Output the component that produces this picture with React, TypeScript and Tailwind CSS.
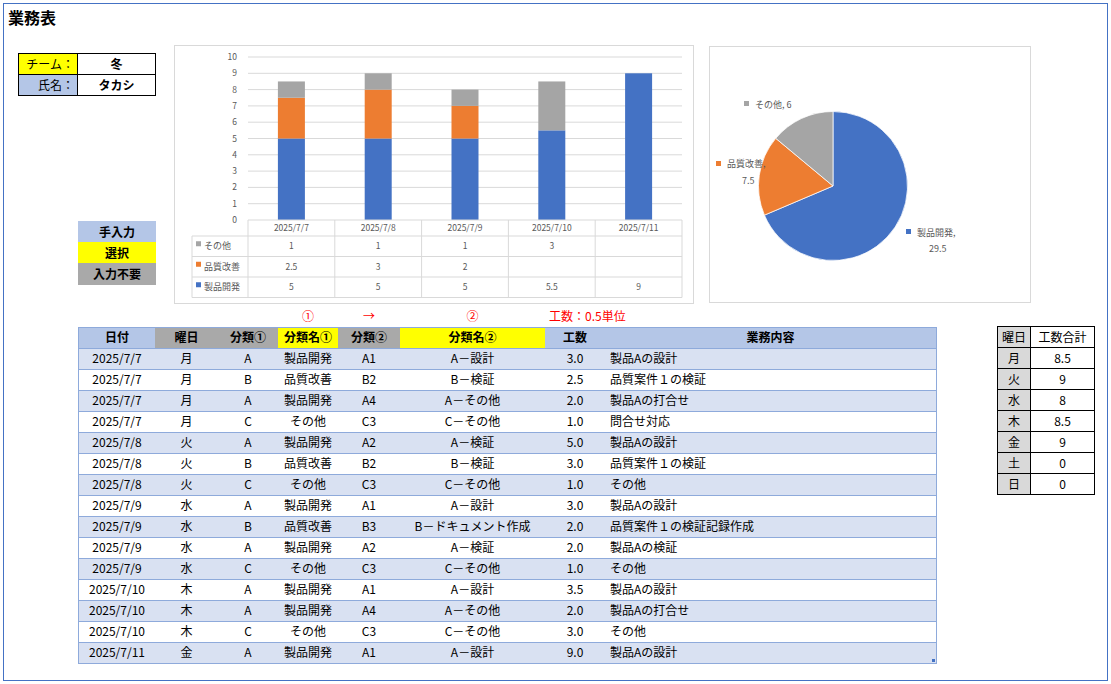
import React from 'react';

type Row = [string, string, string, string, string, string, string, string];

const rows: Row[] = [
  ['2025/7/7', '月', 'A', '製品開発', 'A1', 'A－設計', '3.0', '製品Aの設計'],
  ['2025/7/7', '月', 'B', '品質改善', 'B2', 'B－検証', '2.5', '品質案件１の検証'],
  ['2025/7/7', '月', 'A', '製品開発', 'A4', 'A－その他', '2.0', '製品Aの打合せ'],
  ['2025/7/7', '月', 'C', 'その他', 'C3', 'C－その他', '1.0', '問合せ対応'],
  ['2025/7/8', '火', 'A', '製品開発', 'A2', 'A－検証', '5.0', '製品Aの設計'],
  ['2025/7/8', '火', 'B', '品質改善', 'B2', 'B－検証', '3.0', '品質案件１の検証'],
  ['2025/7/8', '火', 'C', 'その他', 'C3', 'C－その他', '1.0', 'その他'],
  ['2025/7/9', '水', 'A', '製品開発', 'A1', 'A－設計', '3.0', '製品Aの設計'],
  ['2025/7/9', '水', 'B', '品質改善', 'B3', 'B－ドキュメント作成', '2.0', '品質案件１の検証記録作成'],
  ['2025/7/9', '水', 'A', '製品開発', 'A2', 'A－検証', '2.0', '製品Aの検証'],
  ['2025/7/9', '水', 'C', 'その他', 'C3', 'C－その他', '1.0', 'その他'],
  ['2025/7/10', '木', 'A', '製品開発', 'A1', 'A－設計', '3.5', '製品Aの設計'],
  ['2025/7/10', '木', 'A', '製品開発', 'A4', 'A－その他', '2.0', '製品Aの打合せ'],
  ['2025/7/10', '木', 'C', 'その他', 'C3', 'C－その他', '3.0', 'その他'],
  ['2025/7/11', '金', 'A', '製品開発', 'A1', 'A－設計', '9.0', '製品Aの設計'],
];

const cols = [
  { w: 'w-[76px]', head: '日付', bg: 'bg-[#b4c6e7]', align: 'justify-center' },
  { w: 'w-[63px]', head: '曜日', bg: 'bg-[#a9a9a9]', align: 'justify-center' },
  { w: 'w-[60px]', head: '分類①', bg: 'bg-[#a9a9a9]', align: 'justify-center' },
  { w: 'w-[60px]', head: '分類名①', bg: 'bg-[#ffff00]', align: 'justify-center' },
  { w: 'w-[62px]', head: '分類②', bg: 'bg-[#a9a9a9]', align: 'justify-center' },
  { w: 'w-[145px]', head: '分類名②', bg: 'bg-[#ffff00]', align: 'justify-center' },
  { w: 'w-[60px]', head: '工数', bg: 'bg-[#b4c6e7]', align: 'justify-center' },
  { w: 'flex-1', head: '業務内容', bg: 'bg-[#b4c6e7]', align: 'justify-start pl-[5px]' },
];

const totals = [
  ['月', '8.5'],
  ['火', '9'],
  ['水', '8'],
  ['木', '8.5'],
  ['金', '9'],
  ['土', '0'],
  ['日', '0'],
];

// chart data: b = 製品開発, o = 品質改善, g = その他
const chartData = [
  { date: '2025/7/7', b: 5, o: 2.5, g: 1 },
  { date: '2025/7/8', b: 5, o: 3, g: 1 },
  { date: '2025/7/9', b: 5, o: 2, g: 1 },
  { date: '2025/7/10', b: 5.5, o: 0, g: 3 },
  { date: '2025/7/11', b: 9, o: 0, g: 0 },
];

const BLUE = '#4472c4';
const ORANGE = '#ed7d31';
const GRAY = '#a5a5a5';
const LABEL = '#595959';
const LINE = '#d9d9d9';
const FONT = "'Noto Sans CJK JP', 'Noto Sans', sans-serif";

const BarChart = () => {
  const y = (v: number) => 175 - v * 16.3;
  const colW = 86.8;
  const x0 = 74;
  const x1 = x0 + colW * 5;
  const rowLines = [191, 211.5, 232, 252.5];
  const series = [
    { name: 'その他', color: GRAY, key: 'g' as const },
    { name: '品質改善', color: ORANGE, key: 'o' as const },
    { name: '製品開発', color: BLUE, key: 'b' as const },
  ];

  return (
    <svg width={518} height={257} viewBox="1 1 518 257" fontFamily={FONT}>
      {Array.from({ length: 11 }, (_, v) => (
        <g key={v}>
          {v > 0 && <line x1={x0} x2={x1} y1={y(v)} y2={y(v)} stroke={LINE} strokeWidth={1} />}
          <text x={63} y={y(v) + 3} fontSize={8.5} fill={LABEL} textAnchor="end">
            {v}
          </text>
        </g>
      ))}
      {chartData.map((d, i) => {
        const cx = x0 + colW * (i + 0.5);
        const bx = cx - 13.5;
        return (
          <g key={d.date}>
            <rect x={bx} y={y(d.b)} width={27} height={d.b * 16.3} fill={BLUE} />
            {d.o > 0 && <rect x={bx} y={y(d.b + d.o)} width={27} height={d.o * 16.3} fill={ORANGE} />}
            {d.g > 0 && (
              <rect x={bx} y={y(d.b + d.o + d.g)} width={27} height={d.g * 16.3} fill={GRAY} />
            )}
            <text x={cx} y={186} fontSize={8.5} fill={LABEL} textAnchor="middle">
              {d.date}
            </text>
          </g>
        );
      })}
      {/* data table */}
      <line x1={x0} x2={x1} y1={175} y2={175} stroke={LINE} />
      {rowLines.map((ly) => (
        <line key={ly} x1={18} x2={x1} y1={ly} y2={ly} stroke={LINE} />
      ))}
      <line x1={18} x2={18} y1={191} y2={252.5} stroke={LINE} />
      {Array.from({ length: 6 }, (_, k) => (
        <line key={k} x1={x0 + colW * k} x2={x0 + colW * k} y1={175} y2={252.5} stroke={LINE} />
      ))}
      {series.map((s, r) => {
        const cy = (rowLines[r] + rowLines[r + 1]) / 2;
        return (
          <g key={s.name}>
            <rect x={22} y={cy - 5} width={5} height={5} fill={s.color} />
            <text x={30} y={cy + 3} fontSize={9} fill={LABEL}>
              {s.name}
            </text>
            {chartData.map((d, i) =>
              d[s.key] > 0 ? (
                <text
                  key={i}
                  x={x0 + colW * (i + 0.5)}
                  y={cy + 3}
                  fontSize={8.5}
                  fill={LABEL}
                  textAnchor="middle"
                >
                  {d[s.key]}
                </text>
              ) : null
            )}
          </g>
        );
      })}
    </svg>
  );
};

const PieChart = () => (
  <svg width={320} height={255} viewBox="1 1 320 255" fontFamily={FONT}>
    <path d="M124 140 L124 65.5 A74.5 74.5 0 1 1 55.44 169.14 Z" fill={BLUE} stroke="#fff" strokeWidth={0.75} />
    <path d="M124 140 L55.44 169.14 A74.5 74.5 0 0 1 66.74 92.34 Z" fill={ORANGE} stroke="#fff" strokeWidth={0.75} />
    <path d="M124 140 L66.74 92.34 A74.5 74.5 0 0 1 124 65.5 Z" fill={GRAY} stroke="#fff" strokeWidth={0.75} />

    <rect x={35} y={55} width={5} height={5} fill={GRAY} />
    <text x={46} y={62} fontSize={9} fill={LABEL}>
      その他, 6
    </text>

    <rect x={7} y={115} width={5} height={5} fill={ORANGE} />
    <text x={18} y={121} fontSize={9} fill={LABEL}>
      品質改善,
    </text>
    <text x={33} y={138} fontSize={9} fill={LABEL}>
      7.5
    </text>

    <rect x={197} y={183} width={5} height={5} fill={BLUE} />
    <text x={208} y={190} fontSize={9} fill={LABEL}>
      製品開発,
    </text>
    <text x={220} y={206} fontSize={9} fill={LABEL}>
      29.5
    </text>
  </svg>
);

export default function App() {
  return (
    <div className="w-[1111px] h-[684px] bg-white p-[3px] font-['Noto_Sans_CJK_JP','Noto_Sans',sans-serif] text-black">
      <div className="w-[1105px] h-[678px] border border-[#4472c4] flex flex-col">
        {/* title */}
        <div className="h-[40px] pl-[4px] pt-[3px] text-[16px] leading-[20px] font-bold">業務表</div>

        {/* top section */}
        <div className="flex h-[260px]">
          <div className="w-[170px] flex flex-col">
            <div className="mt-[9px] ml-[14px] w-[138px] border border-black text-[12px]">
              <div className="flex h-[21px] border-b border-black">
                <div className="w-[59px] bg-[#ffff00] border-r border-black text-right pr-[3px] leading-[20px]">
                  チーム：
                </div>
                <div className="flex-1 text-center font-bold leading-[20px]">冬</div>
              </div>
              <div className="flex h-[20px]">
                <div className="w-[59px] bg-[#b4c6e7] border-r border-black text-right pr-[3px] leading-[20px]">
                  氏名：
                </div>
                <div className="flex-1 text-center font-bold leading-[20px]">タカシ</div>
              </div>
            </div>
            <div className="mt-[125px] ml-[74px] w-[78px] text-[12px] font-bold text-center leading-[21px]">
              <div className="h-[21px] bg-[#b4c6e7]">手入力</div>
              <div className="h-[21px] bg-[#ffff00]">選択</div>
              <div className="h-[22px] bg-[#a9a9a9]">入力不要</div>
            </div>
          </div>

          <div className="mt-[1px] w-[520px] h-[259px] border border-[#d9d9d9] bg-white">
            <BarChart />
          </div>

          <div className="ml-[15px] mt-[2px] w-[322px] h-[257px] border border-[#d9d9d9] bg-white">
            <PieChart />
          </div>
        </div>

        {/* annotations */}
        <div className="flex h-[23px] ml-[74px] w-[859px] items-center text-[12px] text-[#ff0000] leading-none">
          <div className="w-[77px]" />
          <div className="w-[63px]" />
          <div className="w-[60px]" />
          <div className="w-[60px] text-center">①</div>
          <div className="w-[62px] text-center">→</div>
          <div className="w-[145px] text-center">②</div>
          <div className="pl-[4px]">工数：0.5単位</div>
        </div>

        {/* bottom section */}
        <div className="flex items-start">
          <div className="relative ml-[74px] w-[859px] border border-[#8eaadb] text-[12px] leading-[18px]">
            <div className="flex h-[21px] border-b border-[#8eaadb] font-bold">
              {cols.map((c) => (
                <div key={c.head} className={`${c.w} ${c.bg} flex justify-center`}>
                  {c.head}
                </div>
              ))}
            </div>
            {rows.map((r, i) => (
              <div
                key={i}
                className={`flex ${i < rows.length - 1 ? 'h-[21px] border-b border-[#8eaadb]' : 'h-[20px]'} ${
                  i % 2 === 0 ? 'bg-[#d9e1f2]' : 'bg-white'
                }`}
              >
                {r.map((cell, j) => (
                  <div key={j} className={`${cols[j].w} flex ${cols[j].align} whitespace-nowrap`}>
                    {cell}
                  </div>
                ))}
              </div>
            ))}
            <div className="absolute right-[1px] bottom-[1px] w-[3px] h-[3px] bg-[#4472c4]" />
          </div>

          <div className="ml-[60px] -mt-[1px] w-[98px] border-l border-t border-black text-[12px] leading-[19px] text-center">
            <div className="flex h-[21px] border-b border-black">
              <div className="w-[33px] bg-[#d9d9d9] border-r border-black">曜日</div>
              <div className="flex-1 border-r border-black">工数合計</div>
            </div>
            {totals.map(([d, v]) => (
              <div key={d} className="flex h-[21px] border-b border-black">
                <div className="w-[33px] bg-[#d9d9d9] border-r border-black">{d}</div>
                <div className="flex-1 border-r border-black">{v}</div>
              </div>
            ))}
          </div>
        </div>
      </div>
    </div>
  );
}
